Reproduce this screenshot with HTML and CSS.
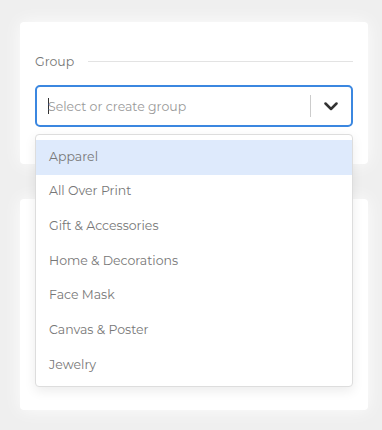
FILE: index.html
```html
<!DOCTYPE html>
<html>
<head>
<meta charset="utf-8">
<link rel="stylesheet" href="styles.css">
</head>
<body>
<div class="page">
  <div class="card card-top">
    <div class="group-head">
      <span class="group-label">Group</span>
      <span class="group-rule"></span>
    </div>
    <div class="select-wrap">
      <div class="select">
        <div class="select-value"><span class="caret"></span><span class="placeholder">Select or create group</span></div>
        <span class="select-sep"></span>
        <span class="select-arrow">
          <svg width="14" height="9" viewBox="0 0 14 9"><path d="M1.5 1.5 L7 7 L12.5 1.5" fill="none" stroke="#333" stroke-width="2.5" stroke-linecap="round" stroke-linejoin="round"/></svg>
        </span>
      </div>
      <ul class="menu">
        <li class="menu-item active">Apparel</li>
        <li class="menu-item">All Over Print</li>
        <li class="menu-item">Gift &amp; Accessories</li>
        <li class="menu-item">Home &amp; Decorations</li>
        <li class="menu-item">Face Mask</li>
        <li class="menu-item">Canvas &amp; Poster</li>
        <li class="menu-item">Jewelry</li>
      </ul>
    </div>
  </div>
  <div class="card card-bottom"></div>
</div>
</body>
</html>
```
FILE: styles.css
```css
* { box-sizing: border-box; }
html, body { margin: 0; padding: 0; }
body {
  background: #efefef;
  font-family: "Montserrat", "Open Sans", "Noto Sans", sans-serif;
  color: #777;
  width: 382px;
  height: 430px;
  overflow: hidden;
}
.page {
  padding: 22px 14px 20px 20px;
  display: flex;
  flex-direction: column;
  gap: 35px;
}
.card {
  background: #fff;
  border-radius: 4px;
  box-shadow: 0 0 18px rgba(255,255,255,0.9);
}
.card-top {
  height: 142px;
  padding: 29px 15px 0 15px;
  position: relative;
  z-index: 2;
}
.card-bottom { height: 211px; }
.group-head {
  display: flex;
  align-items: center;
  gap: 14px;
  height: 20px;
}
.group-label {
  font-size: 12.5px;
  color: #777;
}
.group-rule {
  flex: 1;
  height: 1px;
  background: #e3e3e3;
}
.select-wrap {
  position: relative;
  margin-top: 14px;
}
.select {
  height: 42px;
  border: 2px solid #3b87e0;
  border-radius: 5px;
  display: flex;
  align-items: center;
  padding-left: 11px;
}
.select-value {
  flex: 1;
  display: flex;
  align-items: center;
  font-size: 12.5px;
}
.caret {
  width: 1px;
  height: 16px;
  background: #333;
  margin-right: -1px;
}
.placeholder { color: #999; }
.select-sep {
  width: 1px;
  height: 22px;
  background: #ccc;
}
.select-arrow {
  width: 40px;
  display: flex;
  justify-content: center;
  align-items: center;
}
.menu {
  position: absolute;
  top: 49px;
  left: 0;
  width: 318px;
  margin: 0;
  padding: 5px 0 3px 0;
  list-style: none;
  background: #fff;
  border: 1px solid #ddd;
  border-radius: 4px;
  box-shadow: 0 4px 12px rgba(0,0,0,0.08);
}
.menu-item {
  height: 34.67px;
  display: flex;
  align-items: center;
  padding: 0 0 2px 13px;
  font-size: 12.5px;
  color: #777;
}
.menu-item.active { background: #deeafc; }
```
